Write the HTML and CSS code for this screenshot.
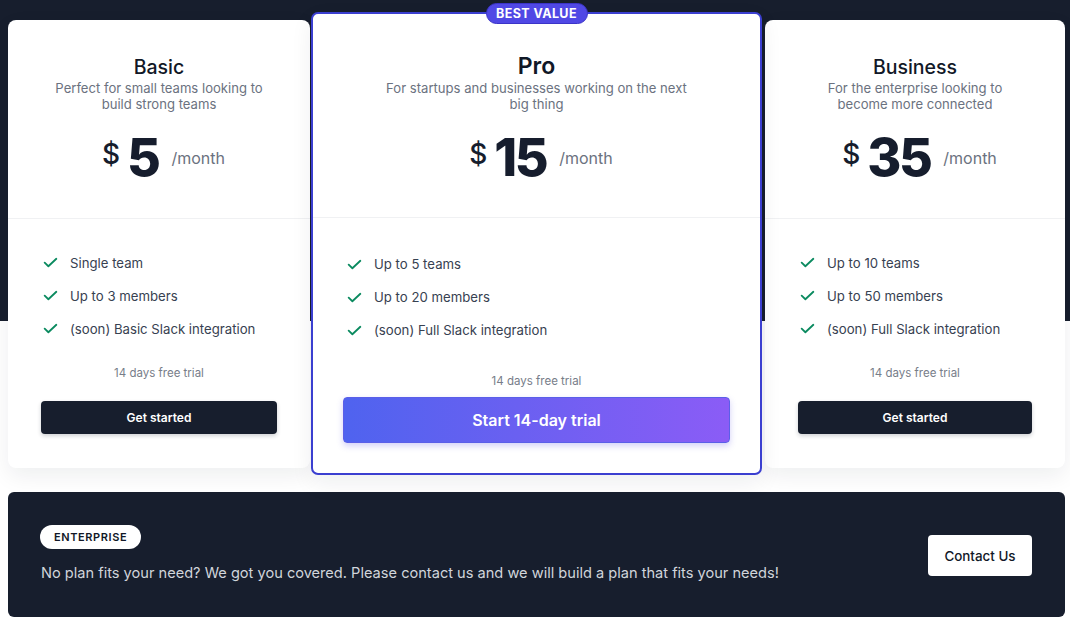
FILE: index.html
```html
<!DOCTYPE html>
<html lang="en">
<head>
<meta charset="utf-8">
<title>Pricing</title>
<link rel="stylesheet" href="styles.css">
</head>
<body>
<div class="page">
  <div class="plans">
    <div class="card">
      <div class="card-head">
        <h2 class="title">Basic</h2>
        <p class="desc">Perfect for small teams looking to build strong teams</p>
        <div class="price"><span class="cur">$</span><span class="amt">5</span><span class="per">/month</span></div>
      </div>
      <div class="card-body">
        <ul class="features">
          <li><svg class="chk" viewBox="0 0 16 16"><path d="M2.5 8.2 L6 11.5 L13.5 4.5"/></svg>Single team</li>
          <li><svg class="chk" viewBox="0 0 16 16"><path d="M2.5 8.2 L6 11.5 L13.5 4.5"/></svg>Up to 3 members</li>
          <li><svg class="chk" viewBox="0 0 16 16"><path d="M2.5 8.2 L6 11.5 L13.5 4.5"/></svg>(soon) Basic Slack integration</li>
        </ul>
        <p class="trial">14 days free trial</p>
        <button class="btn-dark">Get started</button>
      </div>
    </div>

    <div class="card card-pro">
      <span class="badge">BEST VALUE</span>
      <div class="card-head">
        <h2 class="title">Pro</h2>
        <p class="desc">For startups and businesses working on the next big thing</p>
        <div class="price"><span class="cur">$</span><span class="amt">15</span><span class="per">/month</span></div>
      </div>
      <div class="card-body">
        <ul class="features">
          <li><svg class="chk" viewBox="0 0 16 16"><path d="M2.5 8.2 L6 11.5 L13.5 4.5"/></svg>Up to 5 teams</li>
          <li><svg class="chk" viewBox="0 0 16 16"><path d="M2.5 8.2 L6 11.5 L13.5 4.5"/></svg>Up to 20 members</li>
          <li><svg class="chk" viewBox="0 0 16 16"><path d="M2.5 8.2 L6 11.5 L13.5 4.5"/></svg>(soon) Full Slack integration</li>
        </ul>
        <p class="trial">14 days free trial</p>
        <button class="btn-grad">Start 14-day trial</button>
      </div>
    </div>

    <div class="card">
      <div class="card-head">
        <h2 class="title">Business</h2>
        <p class="desc">For the enterprise looking to become more connected</p>
        <div class="price"><span class="cur">$</span><span class="amt">35</span><span class="per">/month</span></div>
      </div>
      <div class="card-body">
        <ul class="features">
          <li><svg class="chk" viewBox="0 0 16 16"><path d="M2.5 8.2 L6 11.5 L13.5 4.5"/></svg>Up to 10 teams</li>
          <li><svg class="chk" viewBox="0 0 16 16"><path d="M2.5 8.2 L6 11.5 L13.5 4.5"/></svg>Up to 50 members</li>
          <li><svg class="chk" viewBox="0 0 16 16"><path d="M2.5 8.2 L6 11.5 L13.5 4.5"/></svg>(soon) Full Slack integration</li>
        </ul>
        <p class="trial">14 days free trial</p>
        <button class="btn-dark">Get started</button>
      </div>
    </div>
  </div>

  <div class="enterprise">
    <div class="ent-text">
      <span class="pill">ENTERPRISE</span>
      <p class="ent-desc">No plan fits your need? We got you covered. Please contact us and we will build a plan that fits your needs!</p>
    </div>
    <button class="btn-white">Contact Us</button>
  </div>
</div>
</body>
</html>
```

FILE: styles.css
```css
* { box-sizing: border-box; }
html, body { margin: 0; padding: 0; }
body {
  font-family: Inter, "Noto Sans", "Liberation Sans", sans-serif;
  background: #ffffff;
  color: #111827;
}
.page {
  width: 1070px;
  height: 624px;
  padding: 12px 5px 0 8px;
  background: linear-gradient(#171e2d 0, #171e2d 321px, #ffffff 321px);
}
.plans {
  display: grid;
  grid-template-columns: 302px 453px 300px;
  column-gap: 1px;
  align-items: center;
}
.card {
  position: relative;
  background: #ffffff;
  border-radius: 8px;
  height: 448px;
  box-shadow: 0 8px 22px rgba(17, 24, 39, 0.07);
}
.card-pro {
  width: 451px;
  justify-self: start;
  height: 463px;
  border: 2px solid #3b3fd0;
  border-radius: 7px;
  z-index: 2;
}
.badge {
  position: absolute;
  top: -11px;
  left: 50%;
  transform: translateX(-50%);
  width: 102px;
  height: 21px;
  line-height: 19px;
  text-align: center;
  background: #5048e5;
  border: 1px solid #3b34c8;
  border-radius: 11px;
  color: #ffffff;
  font-size: 12.5px;
  font-weight: 700;
  letter-spacing: 0.4px;
}
.card-head {
  padding: 34px 20px 33px;
  border-bottom: 1px solid #f0f1f3;
  text-align: center;
}
.card-pro .card-head { padding-top: 38px; padding-bottom: 32px; }
.title {
  margin: 0;
  font-size: 19.5px;
  line-height: 26px;
  font-weight: 500;
  color: #111827;
}
.card-pro .title {
  font-size: 23px;
  line-height: 28px;
  font-weight: 600;
}
.desc {
  margin: 0 auto;
  max-width: 215px;
  font-size: 13.1px;
  line-height: 16px;
  color: #6b7280;
}
.card-pro .desc { max-width: 312px; }
.price {
  margin-top: 19px;
  padding-left: 9px;
  display: flex;
  justify-content: center;
  align-items: center;
  height: 54px;
  color: #161d2d;
}
.cur {
  font-size: 28px;
  font-weight: 500;
  margin-right: 7px;
  margin-bottom: 8px;
}
.amt {
  font-size: 52px;
  line-height: 54px;
  font-weight: 800;
  letter-spacing: -2.5px;
}
.per {
  margin-left: 13px;
  font-size: 16px;
  color: #6b7280;
}
.card-body {
  padding: 34px 33px 33px;
}
.card-pro .card-body { padding: 36px 30px 31px; }
.features {
  list-style: none;
  margin: 0;
  padding: 0;
}
.features li {
  display: flex;
  align-items: center;
  gap: 11px;
  height: 20px;
  margin-bottom: 13px;
  font-size: 13.2px;
  color: #374151;
}
.card-pro .features li { padding-left: 2px; }
.features li:last-child { margin-bottom: 0; }
.chk {
  width: 17px;
  height: 17px;
  margin-left: 1px;
  fill: none;
  stroke: #0a8a5f;
  stroke-width: 1.7;
  stroke-linecap: round;
  stroke-linejoin: round;
}
.trial {
  margin: 26px 0 0;
  text-align: center;
  font-size: 11.5px;
  line-height: 16px;
  color: #777d89;
}
.card-pro .trial { margin-top: 33px; }
.btn-dark {
  display: block;
  width: 100%;
  height: 33px;
  margin-top: 20px;
  border: 0;
  border-radius: 4px;
  background: #171e2d;
  color: #ffffff;
  font-family: inherit;
  font-size: 12px;
  font-weight: 600;
  box-shadow: 0 2px 4px rgba(17, 24, 39, 0.2);
}
.btn-grad {
  display: block;
  width: 100%;
  height: 46px;
  margin-top: 8px;
  border: 1px solid #5a5fe8;
  border-radius: 4px;
  background: linear-gradient(90deg, #4f63ef 0%, #6a60f1 45%, #8b5cf6 100%);
  color: #ffffff;
  font-family: inherit;
  font-size: 16px;
  font-weight: 600;
  box-shadow: 0 3px 6px rgba(79, 70, 229, 0.25);
}
.enterprise {
  margin-top: 17px;
  height: 125px;
  padding: 33px 33px 0 32px;
  background: #171e2d;
  border-radius: 6px;
  display: flex;
  align-items: flex-start;
  justify-content: space-between;
}
.ent-text { display: flex; flex-direction: column; align-items: flex-start; }
.pill {
  display: inline-block;
  height: 24px;
  line-height: 24px;
  padding: 0 14px;
  background: #ffffff;
  border-radius: 12px;
  color: #111827;
  font-size: 11px;
  font-weight: 600;
  letter-spacing: 0.6px;
}
.ent-desc {
  margin: 13px 0 0 1px;
  font-size: 14.6px;
  line-height: 22px;
  color: #d1d5db;
}
.btn-white {
  margin-top: 10px;
  width: 104px;
  height: 41px;
  border: 0;
  border-radius: 4px;
  background: #ffffff;
  color: #111827;
  font-family: inherit;
  font-size: 13.4px;
  font-weight: 500;
}
```
